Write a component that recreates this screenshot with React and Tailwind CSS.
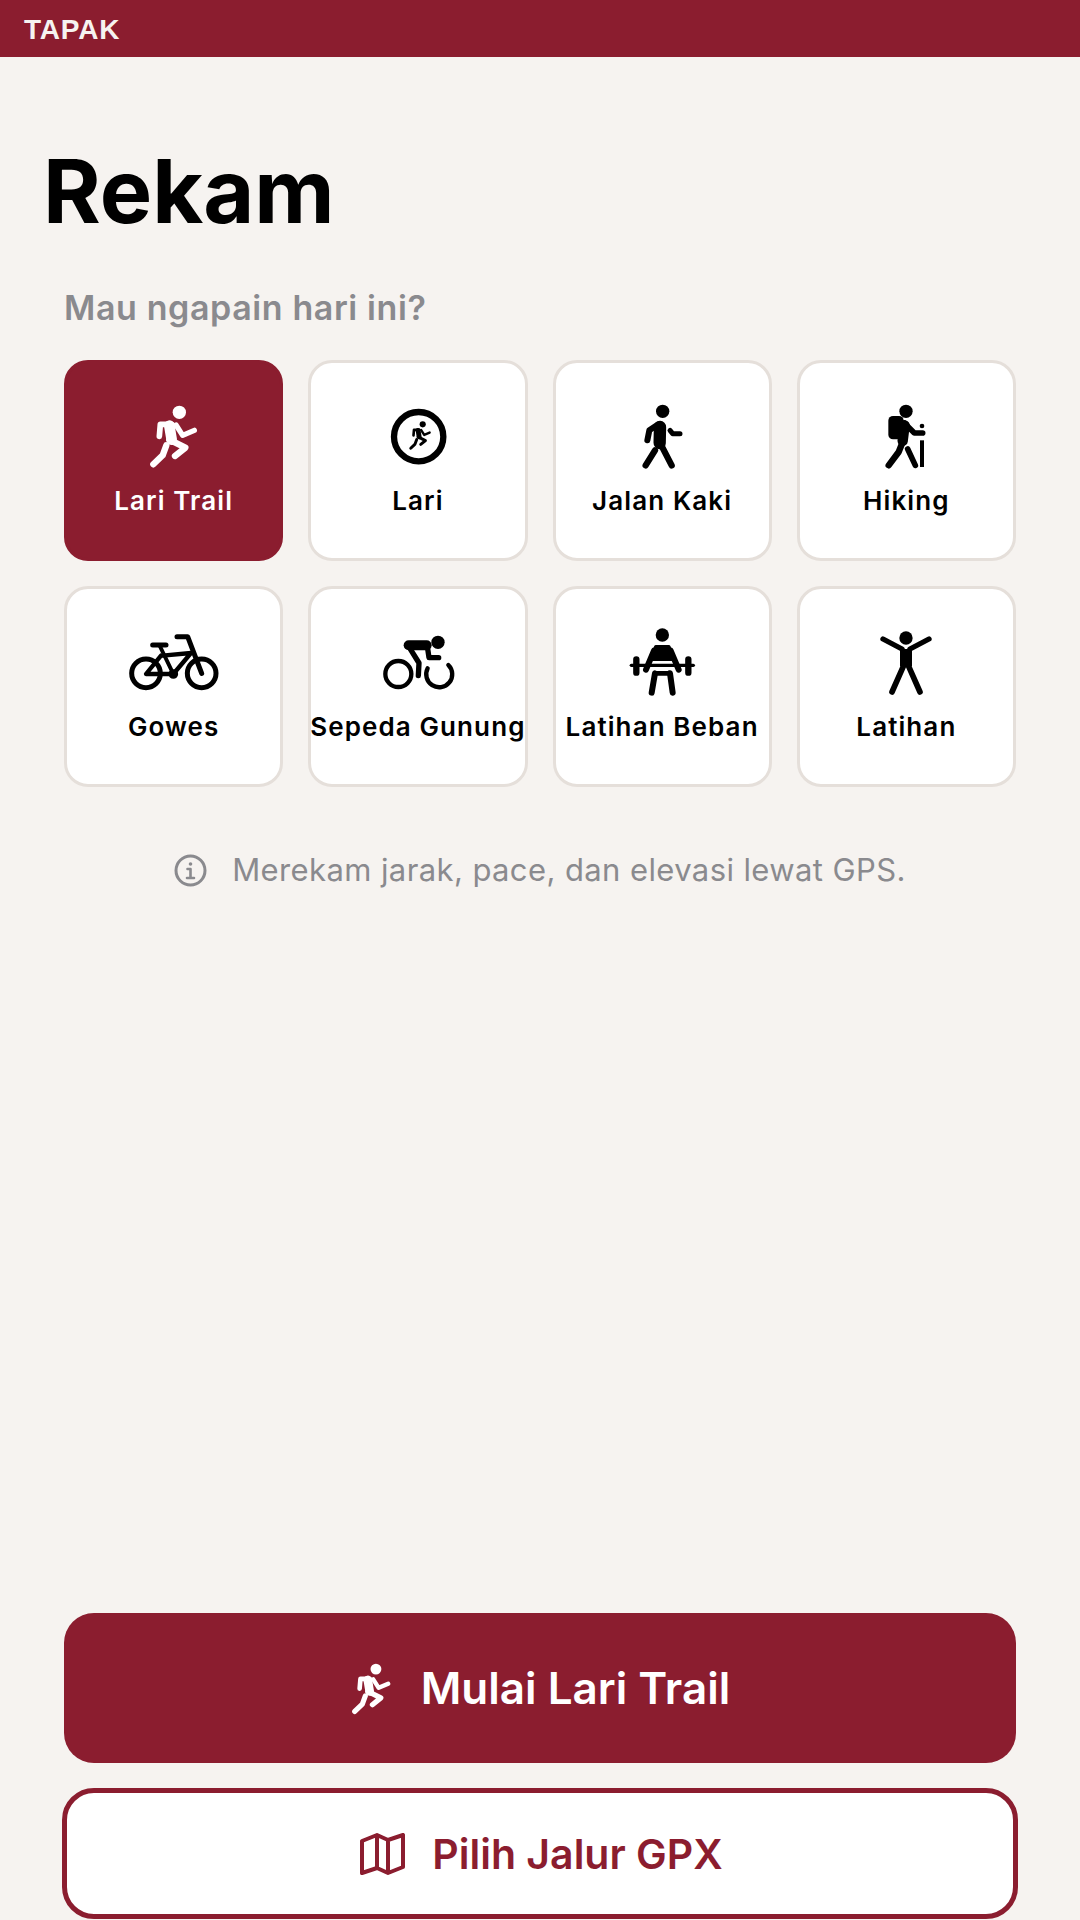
import { Fragment } from 'react';

// icon strokes are in reference-zoom units (3x), so a 300x210 viewBox renders at 100x70
function RunFigure() {
  return (
    <Fragment>
      <circle cx="385" cy="186" r="20" fill="currentColor" stroke="none" />
      <path d="M325 258L328 222H362" strokeWidth="17" />
      <path d="M375 224L395 255L430 240" strokeWidth="16" />
      <path d="M355 226L362 268" strokeWidth="32" />
      <path d="M346 285L335 315L307 342" strokeWidth="19" />
      <path d="M355 268L403 292L372 317" strokeWidth="19" />
    </Fragment>
  );
}

function RunIcon() {
  return <g><RunFigure /></g>;
}

function LariIcon() {
  return (
    <g>
      <circle cx="1104" cy="259" r="74" strokeWidth="19" />
      <g transform="translate(939 136.4) scale(0.46)">
        <RunFigure />
      </g>
    </g>
  );
}

function WalkIcon() {
  return (
    <g>
      <circle cx="368" cy="183" r="20" fill="currentColor" stroke="none" />
      <path d="M322 270L328 240L355 222" strokeWidth="18" />
      <path d="M360 230L359 278" strokeWidth="37" />
      <path d="M390 240L398 250H420" strokeWidth="15" />
      <path d="M364 285L395 345" strokeWidth="19" />
      <path d="M345 300L317 345" strokeWidth="19" />
    </g>
  );
}

function HikingIcon() {
  return (
    <g>
      <circle cx="1100" cy="183" r="20" fill="currentColor" stroke="none" />
      <rect x="1047" y="197" width="46" height="70" rx="14" fill="currentColor" stroke="none" />
      <path d="M1095 218L1125 248H1150" strokeWidth="17" />
      <path d="M1096 225L1090 272" strokeWidth="31" />
      <path d="M1090 275L1078 305L1048 345" strokeWidth="19" />
      <path d="M1105 296L1128 345" strokeWidth="17" />
      <path d="M1148 270V350" strokeWidth="12" strokeLinecap="butt" />
      <circle cx="1148" cy="227" r="7" fill="currentColor" stroke="none" />
    </g>
  );
}

function BikeIcon() {
  return (
    <g strokeWidth="15">
      <circle cx="285" cy="293" r="43" />
      <circle cx="452" cy="293" r="43" />
      <circle cx="367" cy="295" r="9" strokeWidth="11" />
      <path d="M305 208H345" strokeWidth="15" />
      <path d="M325 208L367 295" strokeWidth="12" />
      <path d="M335 240L420 232L367 295" strokeWidth="13" />
      <path d="M378 183H410L452 293" strokeWidth="15" />
      <path d="M367 295H285L330 240" strokeWidth="13" />
    </g>
  );
}

function CyclistIcon() {
  return (
    <g>
      <circle cx="1162" cy="200" r="20" fill="currentColor" stroke="none" />
      <circle cx="1043" cy="295" r="39" strokeWidth="13" />
      <path d="M1131 278A39 39 0 1 0 1193 268" strokeWidth="13" />
      <path d="M1074 209H1128" strokeWidth="30" />
      <path d="M1130 212L1135 246H1164" strokeWidth="16" />
      <path d="M1080 222L1105 262L1103 300" strokeWidth="16" />
    </g>
  );
}

function LifterIcon() {
  return (
    <g>
      <circle cx="367" cy="178" r="20" fill="currentColor" stroke="none" />
      <path d="M348 214H386L400 250H334Z" fill="currentColor" strokeWidth="12" />
      <path d="M342 225L318 282" strokeWidth="18" />
      <path d="M392 225L416 282" strokeWidth="18" />
      <path d="M274 269H460" strokeWidth="10" />
      <path d="M289 251V291M445 251V291" strokeWidth="19" />
      <path d="M345 293H390" strokeWidth="14" />
      <path d="M345 293L335 351M390 293L398 351" strokeWidth="18" />
    </g>
  );
}

function LatihanIcon() {
  return (
    <g>
      <circle cx="1100" cy="187" r="20" fill="currentColor" stroke="none" />
      <path d="M1031 190L1088 220M1169 190L1112 220" strokeWidth="16" />
      <path d="M1100 220V272" strokeWidth="36" strokeLinecap="butt" />
      <path d="M1092 272L1058 349M1108 272L1142 349" strokeWidth="17" />
    </g>
  );
}

const activities = [
  { label: 'Lari Trail', Icon: RunIcon, vb: '219 155 300 210', active: true },
  { label: 'Lari', Icon: LariIcon, vb: '952 155 300 210' },
  { label: 'Jalan Kaki', Icon: WalkIcon, vb: '216 155 300 210' },
  { label: 'Hiking', Icon: HikingIcon, vb: '950 155 300 210' },
  { label: 'Gowes', Icon: BikeIcon, vb: '219 157 300 210' },
  { label: 'Sepeda Gunung', Icon: CyclistIcon, vb: '952 157 300 210' },
  { label: 'Latihan Beban', Icon: LifterIcon, vb: '216 157 300 210' },
  { label: 'Latihan', Icon: LatihanIcon, vb: '950 157 300 210' },
];

function ActivityCard({ label, Icon, vb, active }) {
  return (
    <div className={active
      ? 'h-[201px] rounded-[24px] border-[3px] border-[#8b1d2f] bg-[#8b1d2f] text-white flex flex-col items-center pt-[39px]'
      : 'h-[201px] rounded-[24px] border-[3px] border-[#e5dfda] bg-white text-black flex flex-col items-center pt-[39px]'}>
      <svg viewBox={vb} className="w-[100px] h-[70px]" fill="none" stroke="currentColor" strokeLinecap="round" strokeLinejoin="round">
        <Icon />
      </svg>
      <span className="mt-[13px] text-[26px] leading-[32px] font-semibold tracking-[1.1px] whitespace-nowrap">{label}</span>
    </div>
  );
}

export default function App() {
  return (
    <div className="h-[1920px] flex flex-col bg-[#f6f3f0] font-['Inter',sans-serif] overflow-hidden">
      <div className="h-[57px] bg-[#8b1d2f] flex items-center px-[24px] pt-[2px]">
        <span className="font-['Liberation_Sans',sans-serif] font-bold text-[28px] tracking-[0.8px] text-[#f6f3f0]">TAPAK</span>
      </div>

      <div className="flex-1 flex flex-col px-[64px] pb-[1px]">
        <h1 className="mt-[84px] -ml-[21px] text-[88px] leading-[100px] font-bold text-black">Rekam</h1>
        <p className="mt-[47px] text-[34px] leading-[40px] font-semibold tracking-[0.6px] text-[#8a8a8e]">Mau ngapain hari ini?</p>

        <div className="mt-[32px] grid grid-cols-4 gap-[25px]">
          {activities.map(a => <ActivityCard key={a.label} {...a} />)}
        </div>

        <div className="mt-[64px] flex items-center justify-center gap-[25px] text-[#8a8a8e]">
          <svg viewBox="0 0 33 33" className="w-[33px] h-[33px]" fill="none" stroke="currentColor" strokeWidth="3" strokeLinecap="round" strokeLinejoin="round">
            <circle cx="16.5" cy="16.5" r="14.5" />
            <path d="M13.5 15H16.5V24M13 24H20" strokeWidth="2.6" />
            <circle cx="16.5" cy="10" r="1.8" fill="currentColor" stroke="none" />
          </svg>
          <span className="text-[31px] leading-[38px] tracking-[0.4px]">Merekam jarak, pace, dan elevasi lewat GPS.</span>
        </div>

        <div className="mt-auto flex flex-col gap-[25px]">
          <button className="h-[150px] rounded-[30px] bg-[#8b1d2f] text-white flex items-center justify-center gap-[30px]">
            <svg viewBox="290 160 150 195" className="w-[41px] h-[53px]" fill="none" stroke="currentColor" strokeLinecap="round" strokeLinejoin="round">
              <RunIcon />
            </svg>
            <span className="text-[44px] leading-[54px] font-semibold">Mulai Lari Trail</span>
          </button>
          <button className="-mx-[2px] h-[131px] rounded-[32px] border-[5px] border-[#8b1d2f] bg-white text-[#8b1d2f] flex items-center justify-center gap-[27px]">
            <svg viewBox="-2 0 48 42" className="w-[48px] h-[42px]" fill="none" stroke="currentColor" strokeWidth="4" strokeLinejoin="round">
              <path d="M3 8L18 2L29 7L44 2V34L29 40L18 35L3 40ZM18 2V35M29 7V40" />
            </svg>
            <span className="text-[41px] leading-[50px] font-semibold">Pilih Jalur GPX</span>
          </button>
        </div>
      </div>
    </div>
  );
}
